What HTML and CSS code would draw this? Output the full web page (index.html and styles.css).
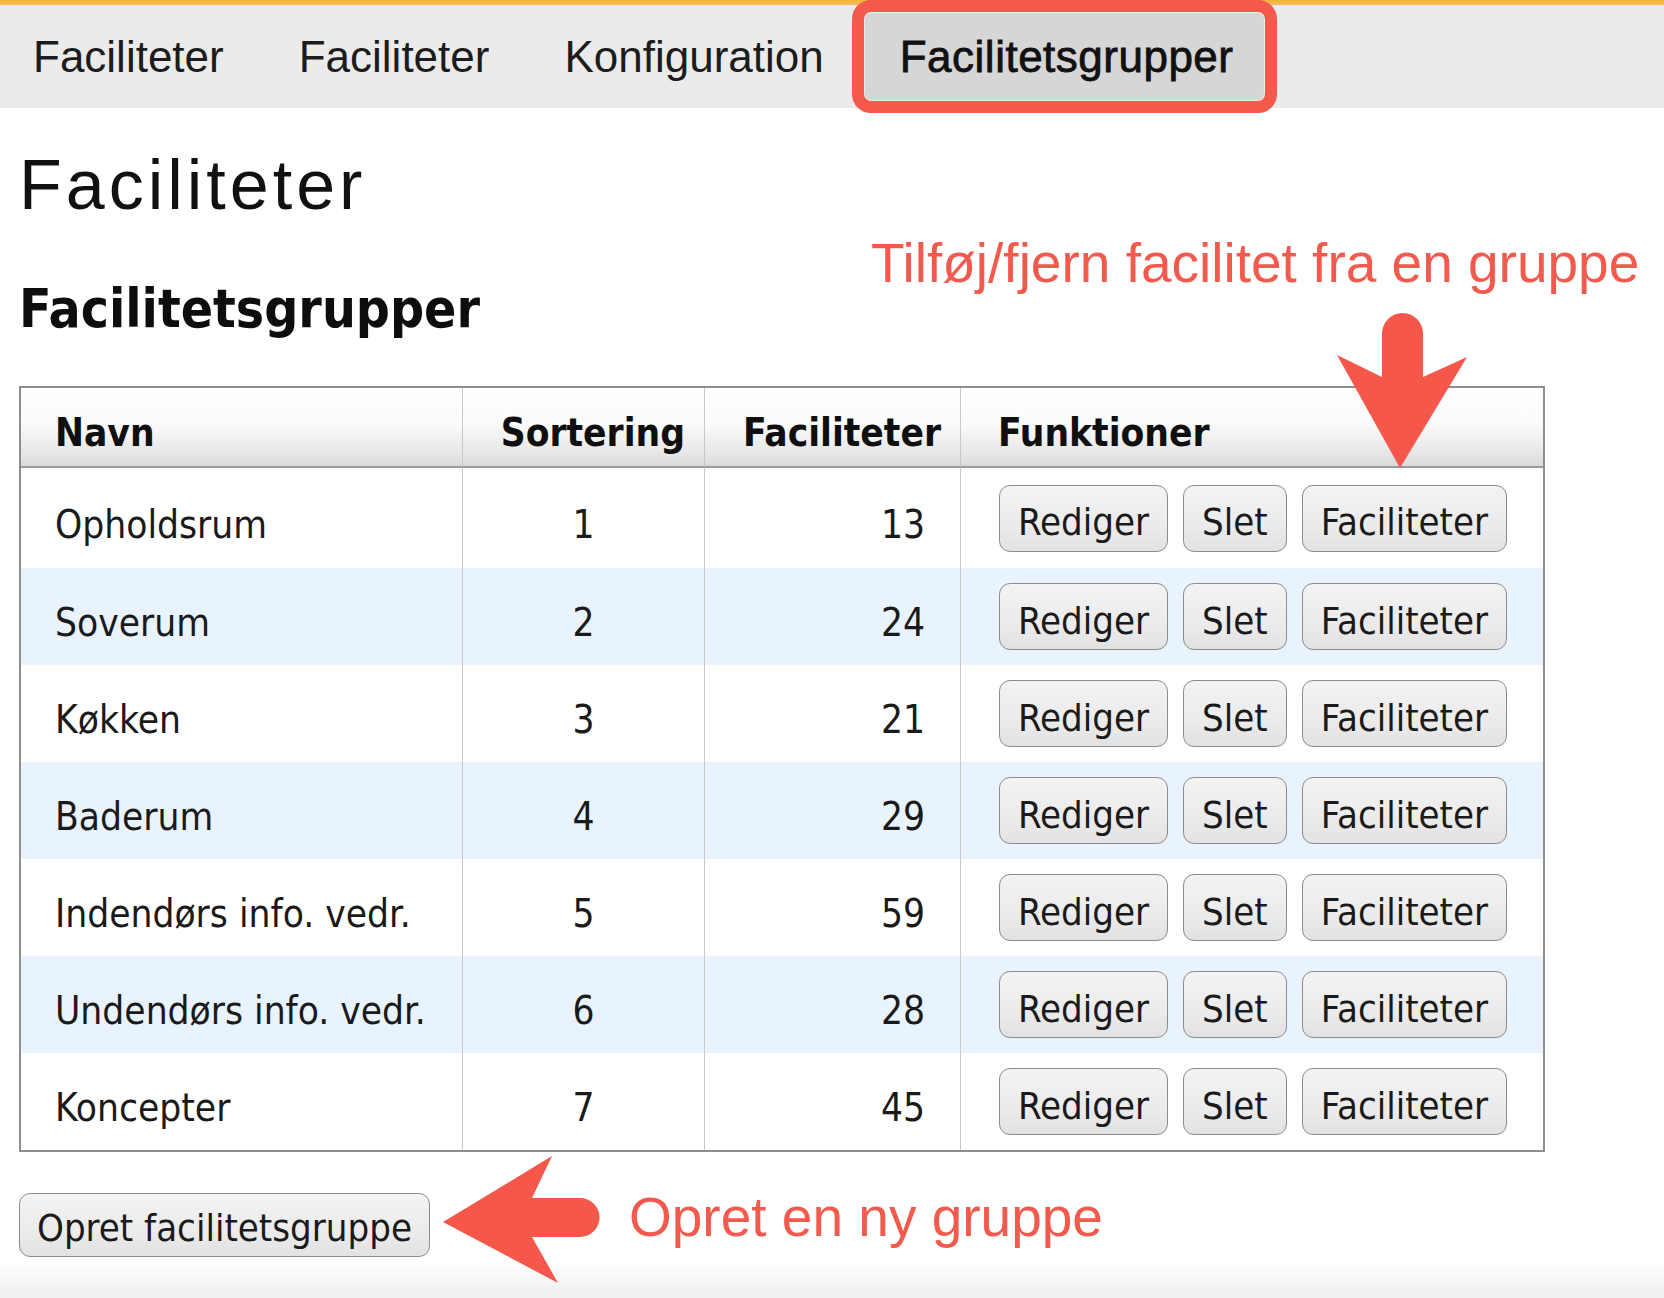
FILE: index.html
```html
<!DOCTYPE html>
<html lang="da">
<head>
<meta charset="utf-8">
<title>Facilitetsgrupper</title>
<link rel="stylesheet" href="styles.css">
</head>
<body>
<div class="topline"></div>
<nav class="tabs">
  <a class="tab">Faciliteter</a>
  <a class="tab">Faciliteter</a>
  <a class="tab">Konfiguration</a>
  <a class="tab active">Facilitetsgrupper</a>
</nav>

<main class="page">
  <h1 class="title">Faciliteter</h1>
  <h2 class="subtitle">Facilitetsgrupper</h2>

  <table class="groups">
    <colgroup>
      <col class="c-name">
      <col class="c-sort">
      <col class="c-count">
      <col class="c-func">
    </colgroup>
    <thead>
      <tr>
        <th class="h-name">Navn</th>
        <th class="h-sort">Sortering</th>
        <th class="h-count">Faciliteter</th>
        <th class="h-func">Funktioner</th>
      </tr>
    </thead>
    <tbody>
      <tr>
        <td class="name">Opholdsrum</td><td class="sort">1</td><td class="count">13</td>
        <td class="actions"><div class="btns"><button class="btn">Rediger</button><button class="btn">Slet</button><button class="btn">Faciliteter</button></div></td>
      </tr>
      <tr class="alt">
        <td class="name">Soverum</td><td class="sort">2</td><td class="count">24</td>
        <td class="actions"><div class="btns"><button class="btn">Rediger</button><button class="btn">Slet</button><button class="btn">Faciliteter</button></div></td>
      </tr>
      <tr>
        <td class="name">Køkken</td><td class="sort">3</td><td class="count">21</td>
        <td class="actions"><div class="btns"><button class="btn">Rediger</button><button class="btn">Slet</button><button class="btn">Faciliteter</button></div></td>
      </tr>
      <tr class="alt">
        <td class="name">Baderum</td><td class="sort">4</td><td class="count">29</td>
        <td class="actions"><div class="btns"><button class="btn">Rediger</button><button class="btn">Slet</button><button class="btn">Faciliteter</button></div></td>
      </tr>
      <tr>
        <td class="name">Indendørs info. vedr.</td><td class="sort">5</td><td class="count">59</td>
        <td class="actions"><div class="btns"><button class="btn">Rediger</button><button class="btn">Slet</button><button class="btn">Faciliteter</button></div></td>
      </tr>
      <tr class="alt">
        <td class="name">Undendørs info. vedr.</td><td class="sort">6</td><td class="count">28</td>
        <td class="actions"><div class="btns"><button class="btn">Rediger</button><button class="btn">Slet</button><button class="btn">Faciliteter</button></div></td>
      </tr>
      <tr>
        <td class="name">Koncepter</td><td class="sort">7</td><td class="count">45</td>
        <td class="actions"><div class="btns"><button class="btn">Rediger</button><button class="btn">Slet</button><button class="btn">Faciliteter</button></div></td>
      </tr>
    </tbody>
  </table>

  <button class="btn create">Opret facilitetsgruppe</button>
</main>

<div class="annot annot-top">Tilføj/fjern facilitet fra en gruppe</div>
<svg class="arrow arrow-down" viewBox="0 0 135 160" width="135" height="160" aria-hidden="true">
  <path d="M65 158 L2 45 L47 67 L47 23.5 A20.5 20.5 0 0 1 88 23.5 L88 67 L132 47 Z"/>
</svg>

<div class="annot annot-bottom">Opret en ny gruppe</div>
<svg class="arrow arrow-left" viewBox="0 0 162 134" width="162" height="134" aria-hidden="true">
  <path d="M3 70 L112 4 L92 46 L140 46 A19.5 19.5 0 0 1 140 85 L92 85 L118 131 Z"/>
</svg>
</body>
</html>
```

FILE: styles.css
```css
html {
  height: 100%;
}
body {
  margin: 0;
  min-height: 100%;
  position: relative;
  font-family: "DejaVu Sans", Verdana, sans-serif;
  color: #141414;
  background: linear-gradient(to bottom, #ffffff 0, #ffffff 1262px, #f1f1f1 1292px);
}

/* ---------- top navigation ---------- */
.topline {
  height: 5px;
  background: linear-gradient(to bottom, #f7b23c, #f4bb5a);
}
.tabs {
  height: 103px;
  display: flex;
  align-items: center;
  padding-left: 33px;
  background: #ebebeb;
  font-family: "Liberation Sans", Arial, sans-serif;
  font-size: 44px;
  color: #1c1c1c;
}
.tab {
  white-space: nowrap;
}
.tab + .tab {
  margin-left: 75px;
}
.tab.active {
  margin-left: 41px;
  height: 87px;
  display: flex;
  align-items: center;
  padding: 0 30px 0 35px;
  background: #d6d6d6;
  border-radius: 6px;
  color: #111;
  letter-spacing: 0.5px;
  -webkit-text-stroke: 0.8px #111;
  outline: 12px solid #f4594b;
  outline-offset: 1px;
}

/* ---------- page ---------- */
.page {
  padding: 42px 0 0 19px;
}
.title {
  margin: 0;
  font-family: "Liberation Sans", Arial, sans-serif;
  font-weight: normal;
  font-size: 70px;
  line-height: 70px;
  letter-spacing: 4px;
  color: #111;
}
.subtitle {
  margin: 63px 0 0 0;
  font-family: "DejaVu Sans", Verdana, sans-serif;
  font-stretch: condensed;
  font-weight: bold;
  font-size: 53px;
  line-height: 52px;
  color: #0d0d0d;
}

/* ---------- table ---------- */
.groups {
  margin-top: 51px;
  width: 1526px;
  table-layout: fixed;
  border-collapse: separate;
  border-spacing: 0;
  border: 2px solid #8e8e8e;
  font-stretch: condensed;
}
.c-name { width: 441px; }
.c-sort { width: 242px; }
.c-count { width: 256px; }
.c-func { width: 583px; }

.groups th {
  height: 80px;
  box-sizing: border-box;
  vertical-align: bottom;
  padding: 0 19px 13px 34px;
  font-size: 38.5px;
  line-height: 40px;
  font-weight: bold;
  color: #0f0f0f;
  background: linear-gradient(to bottom, #ffffff 0%, #fbfbfb 45%, #e6e6e6 85%, #dadada 100%);
  border-bottom: 2px solid #9b9b9b;
  white-space: nowrap;
}
.groups th + th,
.groups td + td {
  border-left: 1px solid #c9c9c9;
}
.h-name { text-align: left; }
.h-sort { text-align: right; }
.h-count { text-align: right; }
.h-func { text-align: left; padding-left: 37px !important; }

.groups tbody tr {
  height: 97px;
}
.groups tbody tr:first-child {
  height: 100px;
}
.groups tr.alt td {
  background: #e9f3fd;
}
.groups td {
  padding: 12px 0 0 0;
  font-size: 38.5px;
  color: #1a1a1a;
  vertical-align: middle;
  white-space: nowrap;
}
.groups td.name {
  padding-left: 34px;
}
.groups td.sort {
  text-align: center;
}
.groups td.count {
  text-align: right;
  padding-right: 35px;
}
.groups td.actions {
  padding: 0 0 0 38px;
}
.btns {
  display: flex;
  gap: 15px;
}

/* ---------- buttons ---------- */
.btn {
  box-sizing: border-box;
  height: 67px;
  padding: 8px 18px 0;
  font-family: "DejaVu Sans", Verdana, sans-serif;
  font-stretch: condensed;
  font-size: 38px;
  line-height: 40px;
  color: #1a1a1a;
  background: linear-gradient(to bottom, #f3f3f4 0%, #ebebec 60%, #e2e2e3 100%);
  border: 1.5px solid #8c8c8c;
  border-radius: 11px;
  white-space: nowrap;
}
.btn.create {
  display: block;
  margin-top: 41px;
  height: 64px;
  padding: 6px 17px 0;
}

/* ---------- annotations (overlay) ---------- */
.annot {
  position: absolute;
  font-family: "Liberation Sans", Arial, sans-serif;
  font-size: 55px;
  line-height: 55px;
  color: #f35a4e;
  white-space: nowrap;
}
.annot-top {
  left: 871px;
  top: 236px;
}
.annot-bottom {
  left: 629px;
  top: 1190px;
}
.arrow {
  position: absolute;
  fill: #f5574a;
}
.arrow-down {
  left: 1335px;
  top: 310px;
}
.arrow-left {
  left: 440px;
  top: 1152px;
}
```
